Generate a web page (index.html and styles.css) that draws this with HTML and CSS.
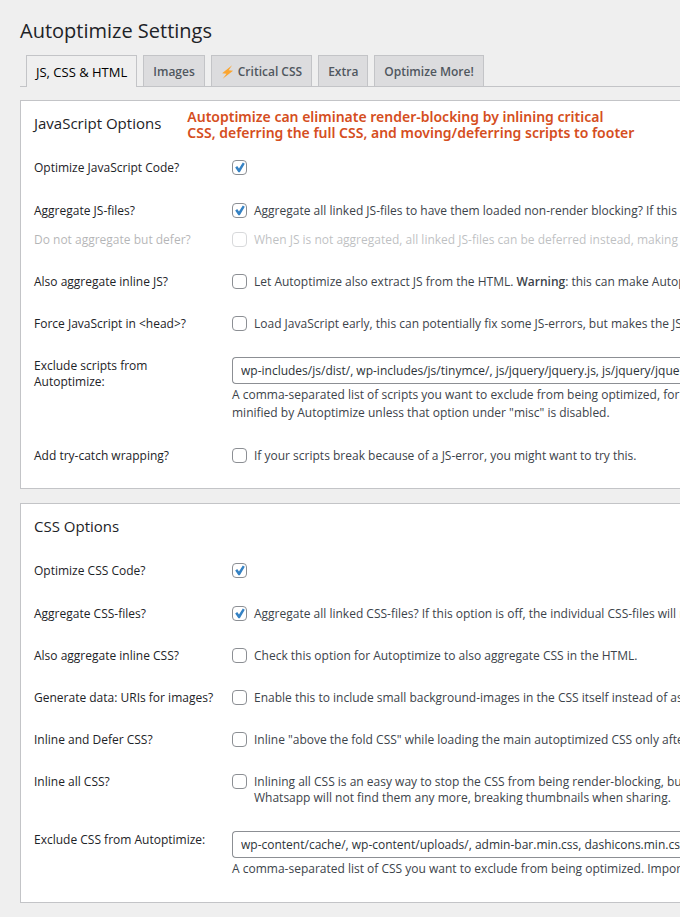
FILE: index.html
```
<!DOCTYPE html>
<html lang="en">
<head>
    <meta charset="UTF-8">
    <meta name="viewport" content="width=device-width, initial-scale=1.0">
    <title>Autoptimize Settings</title>
    <link rel="stylesheet" href="styles.css">
</head>
<body>
    <main class="wrap">
        <h1>Autoptimize Settings</h1>

        <nav class="tabs">
            <a class="tab tab-active" href="#main">JS, CSS &amp; HTML</a>
            <a class="tab" href="#images">Images</a>
            <a class="tab" href="#critcss">
                <svg class="bolt" viewBox="0 0 12 14" aria-hidden="true"><path d="M10.6 0.2 0.6 8.2l4.4 0.5L1.2 13.8 11.6 5.8 7.2 5.3z" fill="#fba52f"/></svg>
                Critical CSS
            </a>
            <a class="tab" href="#extra">Extra</a>
            <a class="tab" href="#more">Optimize More!</a>
        </nav>

        <form>
            <!-- JavaScript -->
            <section class="card">
                <header class="card-header">
                    <h2>JavaScript Options</h2>
                    <p class="promo">Autoptimize can eliminate render-blocking by inlining critical<br>CSS, deferring the full CSS, and moving/deferring scripts to footer</p>
                </header>
                <div class="row row-first">
                    <label class="name" for="js">Optimize JavaScript Code?</label>
                    <div class="field"><input type="checkbox" id="js" checked></div>
                </div>
                <div class="row row-joined">
                    <label class="name" for="js_aggregate">Aggregate JS-files?</label>
                    <label class="field"><input type="checkbox" id="js_aggregate" checked><span>Aggregate all linked JS-files to have them loaded non-render blocking? If this option is off</span></label>
                </div>
                <div class="row row-disabled">
                    <label class="name" for="js_defer">Do not aggregate but defer?</label>
                    <label class="field"><input type="checkbox" id="js_defer" disabled><span>When JS is not aggregated, all linked JS-files can be deferred instead, making them non-blocking</span></label>
                </div>
                <div class="row">
                    <label class="name" for="js_inline">Also aggregate inline JS?</label>
                    <label class="field"><input type="checkbox" id="js_inline"><span>Let Autoptimize also extract JS from the HTML. <strong>Warning</strong>: this can make Autoptimize's cache size grow</span></label>
                </div>
                <div class="row">
                    <label class="name" for="js_head">Force JavaScript in &lt;head&gt;?</label>
                    <label class="field"><input type="checkbox" id="js_head"><span>Load JavaScript early, this can potentially fix some JS-errors, but makes the JS render blocking.</span></label>
                </div>
                <div class="row">
                    <label class="name" for="js_exclude">Exclude scripts from Autoptimize:</label>
                    <div class="text-field">
                        <input type="text" id="js_exclude" value="wp-includes/js/dist/, wp-includes/js/tinymce/, js/jquery/jquery.js, js/jquery/jquery.min.js">
                        <p>A comma-separated list of scripts you want to exclude from being optimized, for example<br>minified by Autoptimize unless that option under "misc" is disabled.</p>
                    </div>
                </div>
                <div class="row">
                    <label class="name" for="js_trycatch">Add try-catch wrapping?</label>
                    <label class="field"><input type="checkbox" id="js_trycatch"><span>If your scripts break because of a JS-error, you might want to try this.</span></label>
                </div>
            </section>

            <!-- CSS -->
            <section class="card">
                <header class="card-header">
                    <h2>CSS Options</h2>
                </header>
                <div class="row row-first">
                    <label class="name" for="css">Optimize CSS Code?</label>
                    <div class="field"><input type="checkbox" id="css" checked></div>
                </div>
                <div class="row">
                    <label class="name" for="css_aggregate">Aggregate CSS-files?</label>
                    <label class="field"><input type="checkbox" id="css_aggregate" checked><span>Aggregate all linked CSS-files? If this option is off, the individual CSS-files will remain in place</span></label>
                </div>
                <div class="row">
                    <label class="name" for="css_inline">Also aggregate inline CSS?</label>
                    <label class="field"><input type="checkbox" id="css_inline"><span>Check this option for Autoptimize to also aggregate CSS in the HTML.</span></label>
                </div>
                <div class="row">
                    <label class="name" for="css_datauris">Generate data: URIs for images?</label>
                    <label class="field"><input type="checkbox" id="css_datauris"><span>Enable this to include small background-images in the CSS itself instead of as separate downloads.</span></label>
                </div>
                <div class="row">
                    <label class="name" for="css_defer">Inline and Defer CSS?</label>
                    <label class="field"><input type="checkbox" id="css_defer"><span>Inline "above the fold CSS" while loading the main autoptimized CSS only after page load.</span></label>
                </div>
                <div class="row">
                    <label class="name" for="css_inline_all">Inline all CSS?</label>
                    <label class="field"><input type="checkbox" id="css_inline_all"><span>Inlining all CSS is an easy way to stop the CSS from being render-blocking, but it is generally<br>Whatsapp will not find them any more, breaking thumbnails when sharing.</span></label>
                </div>
                <div class="row">
                    <label class="name" for="css_exclude">Exclude CSS from Autoptimize:</label>
                    <div class="text-field">
                        <input type="text" id="css_exclude" value="wp-content/cache/, wp-content/uploads/, admin-bar.min.css, dashicons.min.css">
                        <p>A comma-separated list of CSS you want to exclude from being optimized. Important: by default</p>
                    </div>
                </div>
            </section>
        </form>
    </main>
</body>
</html>
```
FILE: styles.css
```
* {
    box-sizing: border-box;
}
body {
    margin: 0;
    background: #efefef;
    color: #3c434a;
    font-family: "Open Sans", "Noto Sans", sans-serif;
    font-size: 12px;
    line-height: 16px;
}
.wrap {
    padding: 16px 0 14px 20px;
    overflow: hidden;
}
h1 {
    margin: 0;
    color: #1d2327;
    font-size: 20px;
    font-weight: 400;
    line-height: 30px;
}

/* Tabs */
.tabs {
    display: flex;
    gap: 6px;
    margin: 9px 0 13px;
    padding-left: 6px;
    border-bottom: 1px solid #c3c4c7;
}
.tab {
    display: flex;
    align-items: center;
    gap: 4px;
    padding: 8px 9px 6px;
    border: 1px solid #c3c4c7;
    border-bottom: 0;
    background: #dcdcde;
    color: #50575e;
    font-size: 12px;
    font-weight: 600;
    text-decoration: none;
    white-space: nowrap;
}
.tab-active {
    margin-bottom: -1px;
    padding-bottom: 7px;
    background: #efefef;
    color: #000;
    font-size: 13px;
    font-weight: 500;
}
.bolt {
    width: 13px;
    height: 14px;
}

/* Option cards, running on to the right edge of the window */
.card {
    margin-bottom: 14px;
    padding: 0 0 11px 13px;
    border: 1px solid #c3c4c7;
    border-right: 0;
    background: #fff;
}
.card-header {
    display: flex;
    gap: 26px;
    height: 46px;
    padding-top: 8px;
    white-space: nowrap;
}
h2 {
    margin: 0;
    color: #1d2327;
    font-size: 15px;
    font-weight: 500;
    line-height: 28px;
}
.promo {
    margin: 0;
    color: #d54e21;
    font-family: "Noto Sans", sans-serif;
    font-size: 14px;
    font-weight: 600;
}
.row {
    display: grid;
    grid-template-columns: 184px minmax(0, 1fr);
    gap: 14px;
    padding: 13px 0;
}
.row-first {
    padding-bottom: 14px;
}
.row-joined {
    padding-bottom: 0;
}
.row-disabled {
    opacity: 0.33;
}
.name {
    color: #1d2327;
}
.field {
    display: flex;
    gap: 7px;
    white-space: nowrap;
}
strong {
    font-weight: 600;
}

input[type="checkbox"] {
    flex: none;
    appearance: none;
    width: 15px;
    height: 15px;
    margin: 0;
    border: 1px solid #8c8f94;
    border-radius: 4px;
    background: #fff;
}
input[type="checkbox"]:checked {
    background: #fff url("data:image/svg+xml,%3Csvg xmlns='http://www.w3.org/2000/svg' viewBox='0 0 13 13'%3E%3Cpath d='M2.2 6.6 4.2 5 6 7.5 9.8 1.6 11.8 2.8 6.8 11.2 5.4 11.2z' fill='%233582c4'/%3E%3C/svg%3E") center / 13px 13px no-repeat;
}

.text-field {
    margin-top: -1px;
    white-space: nowrap;
}
.text-field p {
    margin: 2px 0 0;
    line-height: 18px;
}
input[type="text"] {
    display: block;
    width: 100%;
    height: 27px;
    padding: 0 0 0 8px;
    border: 1px solid #8c8f94;
    border-right: 0;
    border-radius: 4px 0 0 4px;
    background: #fff;
    color: #2c3338;
    font: inherit;
}
```
